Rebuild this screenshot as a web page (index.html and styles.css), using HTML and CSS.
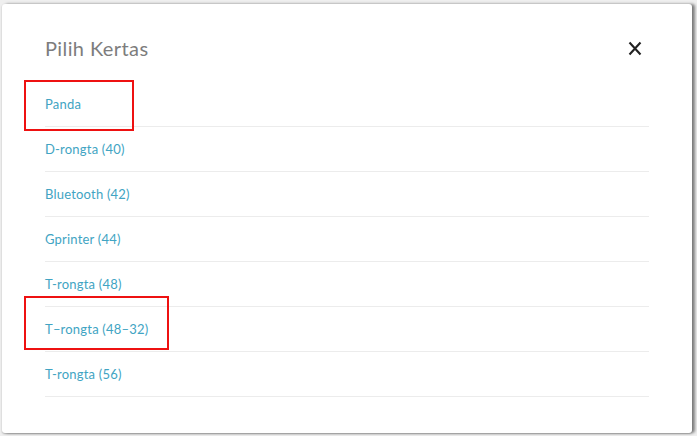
FILE: index.html
```html
<!DOCTYPE html>
<html lang="en">
<head>
    <meta charset="UTF-8">
    <meta name="viewport" content="width=device-width, initial-scale=1.0">
    <title>Pilih Kertas</title>
    <link rel="stylesheet" href="styles.css">
</head>
<body>

<div class="modal">
    <div class="modal-header">
        <h2 class="modal-title">Pilih Kertas</h2>
        <button class="close-btn" aria-label="Tutup">
            <svg width="14" height="15" viewBox="0 0 14 15">
                <path d="M1.5 1.5 L12.5 13.5 M12.5 1.5 L1.5 13.5" stroke="#222" stroke-width="2.1" fill="none"/>
            </svg>
        </button>
    </div>
    <ul class="paper-list">
        <li>Panda</li>
        <li>D-rongta (40)</li>
        <li>Bluetooth (42)</li>
        <li>Gprinter (44)</li>
        <li>T-rongta (48)</li>
        <li>T–rongta (48–32)</li>
        <li>T-rongta (56)</li>
    </ul>
</div>

<!-- annotation boxes -->
<div class="mark mark-1"></div>
<div class="mark mark-2"></div>

</body>
</html>
```

FILE: styles.css
```css
body {
    margin: 0;
    background-color: #efefef;
    font-family: Lato, "Open Sans", sans-serif;
    height: 436px;
    overflow: hidden;
}
.modal {
    margin: 4px 5px 0 2px;
    height: 429px;
    background-color: #fff;
    border-radius: 3px;
    box-shadow: 3px 0 3px rgba(0, 0, 0, 0.45), 0 1px 2px rgba(0, 0, 0, 0.25);
}
.modal-header {
    display: flex;
    align-items: center;
    justify-content: space-between;
    padding: 24px 43px 14px 43px;
}
.modal-title {
    margin: 0;
    line-height: 40px;
    font-size: 20px;
    font-weight: 400;
    letter-spacing: 0.4px;
    color: #7d7d7d;
}
.close-btn {
    margin-right: 7px;
    padding: 0;
    border: none;
    background: none;
    display: flex;
}
.paper-list {
    list-style: none;
    margin: 0 43px;
    padding: 0;
}
.paper-list li {
    height: 44px;
    line-height: 44px;
    border-bottom: 1px solid #ececec;
    font-size: 13px;
    letter-spacing: 0.2px;
    color: #41a4c3;
}
.mark {
    position: absolute;
    border: 2px solid #ee1111;
}
.mark-1 {
    left: 24px;
    top: 80px;
    width: 106px;
    height: 47px;
}
.mark-2 {
    left: 24px;
    top: 296px;
    width: 141px;
    height: 50px;
}
```
